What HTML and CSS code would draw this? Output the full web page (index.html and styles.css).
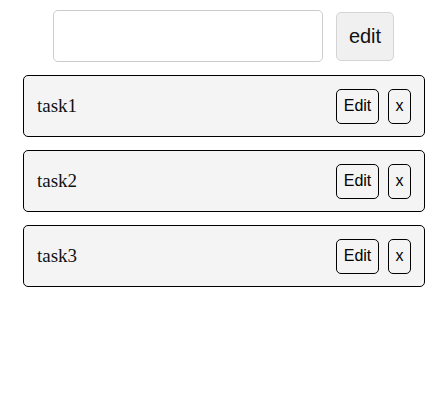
FILE: index.html
```html
<!DOCTYPE html>
<html>
<head>
<meta charset="utf-8">
<link rel="stylesheet" href="styles.css">
</head>
<body>
<div class="app">
  <div class="header">
    <input class="task-input" type="text">
    <button class="main-btn">edit</button>
  </div>
  <div class="list">
    <div class="card"><span class="name">task1</span><div class="actions"><button class="btn btn-edit">Edit</button><button class="btn btn-x">x</button></div></div>
    <div class="card"><span class="name">task2</span><div class="actions"><button class="btn btn-edit">Edit</button><button class="btn btn-x">x</button></div></div>
    <div class="card"><span class="name">task3</span><div class="actions"><button class="btn btn-edit">Edit</button><button class="btn btn-x">x</button></div></div>
  </div>
</div>
</body>
</html>
```
FILE: styles.css
```css
body {
  margin: 0;
  background: #fff;
  font-family: "Liberation Serif", serif;
}
.app {
  padding: 10px 21px 0 23px;
}
.header {
  display: flex;
  justify-content: center;
  align-items: center;
  gap: 13px;
  margin-left: -1px;
}
.task-input {
  box-sizing: border-box;
  width: 270px;
  height: 52px;
  border: 1px solid #cccccc;
  border-radius: 5px;
  outline: none;
  margin: 0;
}
.main-btn {
  box-sizing: border-box;
  width: 58px;
  height: 49px;
  margin: 0;
  padding: 0;
  background: #f0f0f0;
  border: 1px solid #d4d4d4;
  border-radius: 5px;
  font-family: "Liberation Sans", Arial, sans-serif;
  font-size: 20px;
  color: #111;
}
.list {
  display: flex;
  flex-direction: column;
  gap: 13px;
  margin-top: 13px;
}
.card {
  box-sizing: border-box;
  height: 62px;
  display: flex;
  align-items: center;
  justify-content: space-between;
  padding: 0 13px 0 13px;
  background: #f4f4f4;
  border: 1px solid #000;
  border-radius: 5px;
}
.name {
  font-size: 19px;
  color: #111;
}
.actions {
  display: flex;
  gap: 9px;
}
.btn {
  box-sizing: border-box;
  height: 35px;
  margin: 0;
  padding: 0;
  background: #f4f4f4;
  border: 1px solid #000;
  border-radius: 5px;
  font-family: "Liberation Sans", Arial, sans-serif;
  font-size: 16px;
  color: #000;
}
.btn-edit {
  width: 43px;
}
.btn-x {
  width: 23px;
}
```
